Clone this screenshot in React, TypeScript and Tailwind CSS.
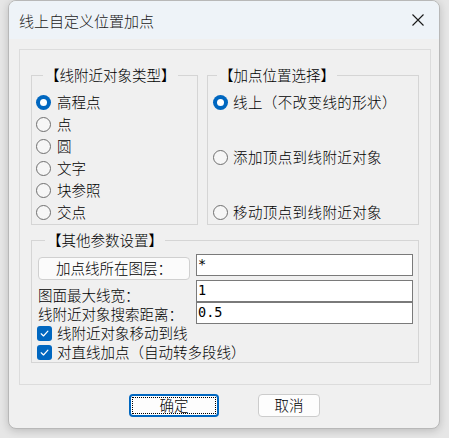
const nearTypes = ['高程点', '点', '圆', '文字', '块参照', '交点']
const positions = ['线上（不改变线的形状）', '添加顶点到线附近对象', '移动顶点到线附近对象']

function Radio({ checked }: { checked?: boolean }) {
  if (checked) {
    return (
      <span className="flex h-[15px] w-[15px] shrink-0 items-center justify-center rounded-full bg-[#0067c0]">
        <span className="h-[7px] w-[7px] rounded-full bg-white" />
      </span>
    )
  }
  return <span className="h-[15px] w-[15px] shrink-0 rounded-full border border-[#6f6f6f] bg-[#f6f6f6]" />
}

function Check() {
  return (
    <span className="flex h-[15px] w-[15px] shrink-0 items-center justify-center rounded-[3px] bg-[#0067c0]">
      <svg viewBox="0 0 12 12" className="h-[11px] w-[11px]">
        <path d="M2.4 6.3 L4.9 8.7 L9.7 3.5" fill="none" stroke="white" strokeWidth="1.3" strokeLinecap="round" strokeLinejoin="round" />
      </svg>
    </span>
  )
}

function Field({ value }: { value: string }) {
  return (
    <div className="flex h-[22px] w-[217px] items-center border border-[#7a7a7a] bg-white pl-[1px] font-['DejaVu_Sans_Mono',monospace] text-[13.5px] leading-none">
      {value}
    </div>
  )
}

export default function App() {
  return (
    <div className="h-[438px] w-[449px] bg-[#e6e6e6] pl-[8px] font-['Noto_Sans_CJK_SC',sans-serif] text-[14.5px] font-light text-black">
      <div className="h-[429px] w-[432px] overflow-hidden rounded-lg border border-[#b8b8b8] bg-[#f0f0f0] shadow-[0_2px_8px_rgba(0,0,0,0.18)]">
        {/* title bar */}
        <div className="flex h-[38px] items-center justify-between bg-[#eef3f8] pl-[10px] pr-[15px]">
          <span className="text-[15px] leading-none text-[#1a1a1a]">线上自定义位置加点</span>
          <svg viewBox="0 0 12 12" className="h-[12px] w-[12px]">
            <path d="M0.5 0.5 L11.5 11.5 M11.5 0.5 L0.5 11.5" stroke="#1a1a1a" strokeWidth="1.1" fill="none" />
          </svg>
        </div>

        {/* outer frame */}
        <div className="ml-[10px] mt-[10px] h-[336px] w-[412px] border border-[#dcdcdc] px-[11px] pt-[16px]">
          <div className="flex gap-[9px]">
            <fieldset className="h-[159px] w-[167px] border border-[#d5d5d5] pl-[4px]">
              <legend className="ml-[7px] px-[2px] leading-[18px]">【线附近对象类型】</legend>
              <div className="mt-[7px] flex flex-col">
                {nearTypes.map((t, i) => (
                  <div key={t} className="flex h-[22px] items-center gap-[6px] leading-none">
                    <Radio checked={i === 0} />
                    <span>{t}</span>
                  </div>
                ))}
              </div>
            </fieldset>

            <fieldset className="h-[159px] flex-1 border border-[#d5d5d5] pl-[5px]">
              <legend className="ml-[4px] px-[2px] leading-[18px]">【加点位置选择】</legend>
              <div className="mt-[7px] flex h-[132px] flex-col justify-between">
                {positions.map((t, i) => (
                  <div key={t} className="flex h-[22px] items-center gap-[5px] leading-none">
                    <Radio checked={i === 0} />
                    <span className="tracking-[0.4px]">{t}</span>
                  </div>
                ))}
              </div>
            </fieldset>
          </div>

          <fieldset className="mt-[6px] h-[132px] border border-[#d5d5d5] pl-[6px] pr-[5px]">
            <legend className="ml-[7px] px-[2px] leading-[18px]">【其他参数设置】</legend>
            <div className="pt-[5px]">
              <div className="flex h-[26px] items-start">
                <div className="w-[158px]">
                  <button className="mt-[3px] flex h-[23px] w-[152px] items-center justify-center rounded-[4px] border border-[#d0d0d0] bg-[#fbfbfb] leading-none">
                    加点线所在图层：
                  </button>
                </div>
                <Field value="*" />
              </div>
              <div className="flex h-[22px]">
                <div className="w-[158px] pt-[6px] leading-[18px]">图面最大线宽：</div>
                <Field value="1" />
              </div>
              <div className="flex h-[22px]">
                <div className="w-[158px] pt-[3px] leading-[18px]">线附近对象搜索距离：</div>
                <Field value="0.5" />
              </div>
              <div className="-ml-[1px] flex h-[19px] items-center gap-[5px] leading-none">
                <Check />
                <span>线附近对象移动到线</span>
              </div>
              <div className="-ml-[1px] flex h-[19px] items-center gap-[5px] leading-none">
                <Check />
                <span>对直线加点（自动转多段线）</span>
              </div>
            </div>
          </fieldset>
        </div>

        {/* buttons */}
        <div className="mt-[9px] flex justify-center gap-[39px] pl-[1px]">
          <button className="h-[23px] w-[90px] rounded-[4px] border-2 border-[#0067c0] bg-[#fdfdfd] p-[1px]">
            <span className="flex h-full w-full items-center justify-center border border-dotted border-black leading-none">
              确定
            </span>
          </button>
          <button className="flex h-[23px] w-[62px] items-center justify-center rounded-[4px] border border-[#cccccc] bg-[#fdfdfd] leading-none">
            取消
          </button>
        </div>
      </div>
    </div>
  )
}
